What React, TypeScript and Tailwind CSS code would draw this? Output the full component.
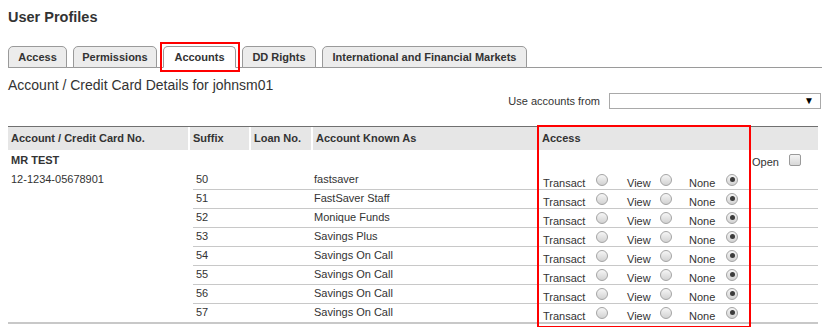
import React from "react";

const tabs = [
    {label: "Access", w: "w-[59px]"},
    {label: "Permissions", w: "w-[84px]"},
    {label: "Accounts", w: "w-[73px]", active: true},
    {label: "DD Rights", w: "w-[74px]"},
    {label: "International and Financial Markets", w: "w-[205px]"},
];

const accounts = [
    ["50", "fastsaver"],
    ["51", "FastSaver Staff"],
    ["52", "Monique Funds"],
    ["53", "Savings Plus"],
    ["54", "Savings On Call"],
    ["55", "Savings On Call"],
    ["56", "Savings On Call"],
    ["57", "Savings On Call"],
];

// old-style grey radio button
const Radio: React.FC<{checked?: boolean}> = ({checked}) => (
    <span
        className="flex items-center justify-center w-[12px] h-[12px] rounded-full border border-[#a4a4a4] bg-gradient-to-b from-[#f6f6f6] to-[#d2d2d2] shrink-0">
        {checked && <span className="w-[5px] h-[5px] rounded-full bg-[#3c3c3c]"></span>}
    </span>
);

const App: React.FC = () => {
    return (
        <div className="min-h-screen bg-white text-[#333] font-['Liberation_Sans',Arial,sans-serif] pl-[8px] pt-[9px]">
            <h1 className="text-[14.5px] font-bold leading-[17px]">User Profiles</h1>

            {/* Tabs */}
            <div className="mt-[20px] w-[814px] flex items-end gap-[6px] border-b border-[#9a9a9a]">
                {tabs.map((t) => (
                    <div
                        key={t.label}
                        className={`relative ${t.w} h-[22px] -mb-px flex items-center justify-center rounded-t-[5px] border border-[#9a9a9a] text-[11px] font-bold ${
                            t.active ? "bg-white border-b-white" : "bg-[#ececec]"
                        }`}
                    >
                        {t.label}
                        {t.active && (
                            <span className="absolute -left-[4px] -right-[5px] -top-[5px] -bottom-[5px] border-2 border-[#ff0000]"></span>
                        )}
                    </div>
                ))}
            </div>

            <h2 className="mt-[9px] text-[14px] leading-[16px]">Account / Credit Card Details for johnsm01</h2>

            {/* Use accounts from */}
            <div className="w-[813px] flex justify-end items-center gap-[9px] text-[11px]">
                <span>Use accounts from</span>
                <div className="w-[212px] h-[16px] border border-[#a9a9a9] bg-white flex items-center justify-end pr-[6px]">
                    <span className="text-[10px] leading-none text-black">▼</span>
                </div>
            </div>

            {/* Table */}
            <div className="relative mt-[16px] w-[810px] text-[11px] border-t border-[#707070] border-b-2 border-b-[#c8c8c8]">
                <div className="flex h-[23px] bg-[#e6e6e6] font-bold">
                    <div className="w-[182px] pl-[3px] flex items-center border-r-2 border-white">Account / Credit Card No.</div>
                    <div className="w-[61px] pl-[3px] flex items-center border-r-2 border-white">Suffix</div>
                    <div className="w-[62px] pl-[3px] flex items-center border-r-2 border-white">Loan No.</div>
                    <div className="w-[225px] pl-[3px] flex items-center">Account Known As</div>
                    <div className="w-[212px] pl-[4px] flex items-center">Access</div>
                    <div className="w-[68px]"></div>
                </div>

                <div className="flex h-[21px]">
                    <div className="w-[742px] pl-[3px] flex items-center font-bold">MR TEST</div>
                    <div className="w-[68px] flex items-center pl-[2px]">
                        <span className="w-[37px] pt-[4px]">Open</span>
                        <span className="w-[12px] h-[12px] rounded-[2px] border border-[#9a9a9a] bg-gradient-to-b from-[#f4f4f4] to-[#d8d8d8]"></span>
                    </div>
                </div>

                <div className="flex">
                    <div className="w-[185px]">
                        <div className="h-[18px] pl-[3px] flex items-center">12-1234-05678901</div>
                    </div>
                    <div className="w-[625px]">
                        {accounts.map(([suffix, name], i) => (
                            <div
                                key={suffix}
                                className={`flex ${i < accounts.length - 1 ? "h-[19px] border-b border-[#c8c8c8]" : "h-[18px]"}`}
                            >
                                <div className="w-[121px] pl-[3px] flex items-center">{suffix}</div>
                                <div className="w-[224px] flex items-center">{name}</div>
                                <div className="w-[212px] pl-[5px] flex items-center">
                                    <span className="w-[53px] self-end leading-[13px] -mb-px">Transact</span>
                                    <Radio/>
                                    <span className="ml-[19px] w-[33px] self-end leading-[13px] -mb-px">View</span>
                                    <Radio/>
                                    <span className="ml-[17px] w-[37px] self-end leading-[13px] -mb-px">None</span>
                                    <Radio checked/>
                                </div>
                                <div className="w-[68px]"></div>
                            </div>
                        ))}
                    </div>
                </div>

                {/* highlight around the Access column */}
                <span className="absolute left-[529px] w-[214px] -top-[2px] -bottom-[6px] border-2 border-[#ff0000] pointer-events-none"></span>
            </div>
        </div>
    );
};

export default App;
